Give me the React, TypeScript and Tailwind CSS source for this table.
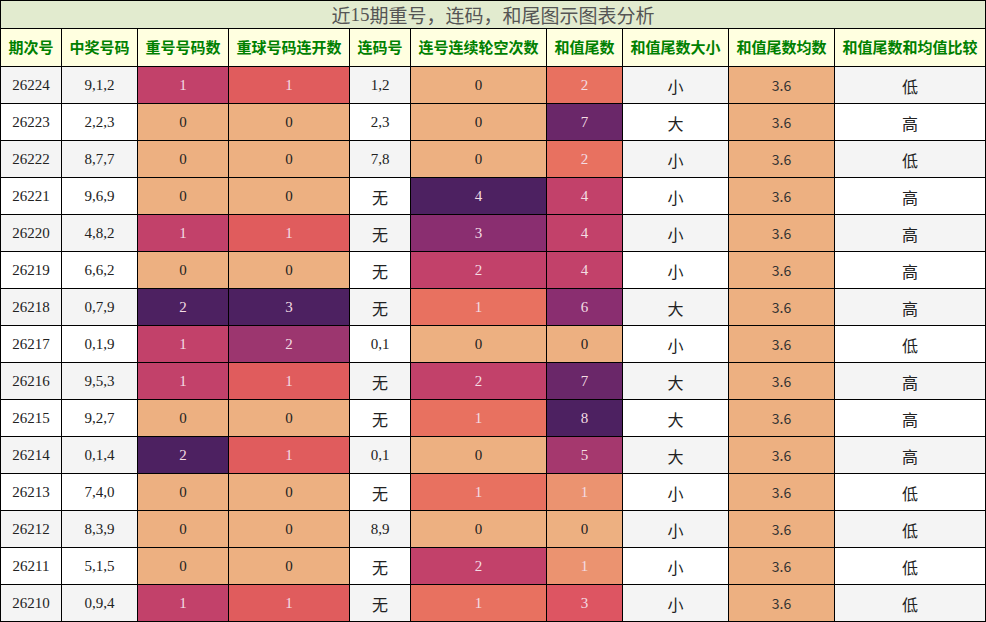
import React from "react";

type Row = {
  p: string;
  n: string;
  c: number;
  k: number;
  l: string;
  r: number;
  w: number;
  s: string;
  h: string;
};

const rows: Row[] = [
  { p: "26224", n: "9,1,2", c: 1, k: 1, l: "1,2", r: 0, w: 2, s: "小", h: "低" },
  { p: "26223", n: "2,2,3", c: 0, k: 0, l: "2,3", r: 0, w: 7, s: "大", h: "高" },
  { p: "26222", n: "8,7,7", c: 0, k: 0, l: "7,8", r: 0, w: 2, s: "小", h: "低" },
  { p: "26221", n: "9,6,9", c: 0, k: 0, l: "无", r: 4, w: 4, s: "小", h: "高" },
  { p: "26220", n: "4,8,2", c: 1, k: 1, l: "无", r: 3, w: 4, s: "小", h: "高" },
  { p: "26219", n: "6,6,2", c: 0, k: 0, l: "无", r: 2, w: 4, s: "小", h: "高" },
  { p: "26218", n: "0,7,9", c: 2, k: 3, l: "无", r: 1, w: 6, s: "大", h: "高" },
  { p: "26217", n: "0,1,9", c: 1, k: 2, l: "0,1", r: 0, w: 0, s: "小", h: "低" },
  { p: "26216", n: "9,5,3", c: 1, k: 1, l: "无", r: 2, w: 7, s: "大", h: "高" },
  { p: "26215", n: "9,2,7", c: 0, k: 0, l: "无", r: 1, w: 8, s: "大", h: "高" },
  { p: "26214", n: "0,1,4", c: 2, k: 1, l: "0,1", r: 0, w: 5, s: "大", h: "高" },
  { p: "26213", n: "7,4,0", c: 0, k: 0, l: "无", r: 1, w: 1, s: "小", h: "低" },
  { p: "26212", n: "8,3,9", c: 0, k: 0, l: "8,9", r: 0, w: 0, s: "小", h: "低" },
  { p: "26211", n: "5,1,5", c: 0, k: 0, l: "无", r: 2, w: 1, s: "小", h: "低" },
  { p: "26210", n: "0,9,4", c: 1, k: 1, l: "无", r: 1, w: 3, s: "小", h: "低" },
];

const PEACH = "#edb081";
const cColors = [PEACH, "#c2416a", "#4d2161"];
const kColors = [PEACH, "#e05c5d", "#9c366f", "#4d2161"];
const rColors = [PEACH, "#e87160", "#c2416a", "#8a2e70", "#4d2161"];
const wColors = [
  PEACH,
  "#eb9370",
  "#e87160",
  "#dd5562",
  "#c2416a",
  "#a5386e",
  "#8a2e70",
  "#6a2769",
  "#4d2161",
];

const headers = [
  "期次号",
  "中奖号码",
  "重号号码数",
  "重球号码连开数",
  "连码号",
  "连号连续轮空次数",
  "和值尾数",
  "和值尾数大小",
  "和值尾数均数",
  "和值尾数和均值比较",
];

const serif = "font-['Liberation_Serif','Noto_Sans_CJK_SC',serif]";
const cjk = "font-['Noto_Sans_CJK_SC',sans-serif]";

function ColorCell({ v, color }: { v: number; color: string }) {
  const isZero = v === 0;
  return (
    <div
      className={`flex items-center justify-center border-r border-b border-black text-[15px] ${serif} ${
        isZero ? "text-[#222]" : "text-[#f3dde3]"
      }`}
      style={{ backgroundColor: color }}
    >
      {v}
    </div>
  );
}

export default function App() {
  return (
    <div className="w-[986px] h-[622px] bg-white overflow-hidden">
      <div className="border-l border-t border-black">
        <div
          className={`h-[28px] border-r border-b border-black bg-[#e2ebcf] flex items-center justify-center text-[19px] text-[#555] ${serif} leading-none`}
        >
          <span className="font-['Noto_Sans_CJK_SC',serif]">近</span>
          <span>15</span>
          <span className="font-['Noto_Sans_CJK_SC',serif]">期重号，连码，和尾图示图表分析</span>
        </div>
        <div className="grid grid-cols-[61px_76px_91px_121px_61px_136px_76px_106px_106px_151px] grid-rows-[38px] auto-rows-[37px]">
          {headers.map((h) => (
            <div
              key={h}
              className={`flex items-center justify-center border-r border-b border-black bg-[#ffffe0] text-[#008000] font-bold text-[15px] ${cjk}`}
            >
              {h}
            </div>
          ))}
          {rows.map((r, i) => {
            const bg = i % 2 === 0 ? "bg-[#f4f4f4]" : "bg-white";
            return (
              <React.Fragment key={r.p}>
                <div
                  className={`flex items-center justify-center border-r border-b border-black ${bg} text-[15px] text-[#222] ${serif}`}
                >
                  {r.p}
                </div>
                <div
                  className={`flex items-center justify-center border-r border-b border-black ${bg} text-[15px] text-[#222] ${serif}`}
                >
                  {r.n}
                </div>
                <ColorCell v={r.c} color={cColors[r.c]} />
                <ColorCell v={r.k} color={kColors[r.k]} />
                <div
                  className={`flex items-center justify-center border-r border-b border-black ${bg} text-[#222] ${
                    r.l === "无" ? `text-[16px] pt-[1px] ${cjk}` : `text-[15px] ${serif}`
                  }`}
                >
                  {r.l}
                </div>
                <ColorCell v={r.r} color={rColors[r.r]} />
                <ColorCell v={r.w} color={wColors[r.w]} />
                <div
                  className={`flex items-center justify-center pt-[1px] border-r border-b border-black ${bg} text-[16px] text-[#222] ${cjk}`}
                >
                  {r.s}
                </div>
                <div
                  className={`flex items-center justify-center border-r border-b border-black bg-[#edb081] text-[14px] text-[#333] font-['Noto_Sans_CJK_SC',sans-serif]`}
                >
                  3.6
                </div>
                <div
                  className={`flex items-center justify-center pt-[1px] border-r border-b border-black ${bg} text-[16px] text-[#222] ${cjk}`}
                >
                  {r.h}
                </div>
              </React.Fragment>
            );
          })}
        </div>
      </div>
    </div>
  );
}
